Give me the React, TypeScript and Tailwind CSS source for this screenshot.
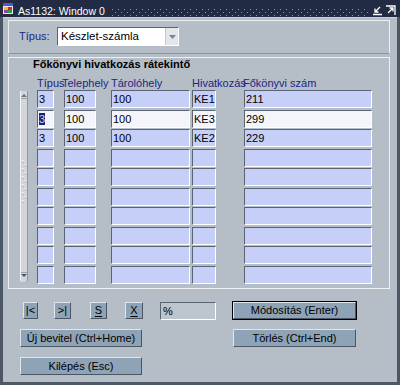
import React from "react";

const rows: string[][] = [
  ["3", "100", "100", "KE1", "211"],
  ["3", "100", "100", "KE3", "299"],
  ["3", "100", "100", "KE2", "229"],
  ["", "", "", "", ""],
  ["", "", "", "", ""],
  ["", "", "", "", ""],
  ["", "", "", "", ""],
  ["", "", "", "", ""],
  ["", "", "", "", ""],
  ["", "", "", "", ""],
];

// field widths and the gap before each one
const cols = [
  "w-[17px]",
  "w-[32px] ml-[10px]",
  "w-[79px] ml-[15px]",
  "w-[24px] ml-[2px]",
  "w-[128px] ml-[28px]",
];

const inset =
  "border border-t-[#5b6475] border-l-[#5b6475] border-b-white border-r-white";

function Btn({
  children,
  className = "",
}: {
  children: React.ReactNode;
  className?: string;
}) {
  return (
    <div
      className={`flex items-center justify-center bg-[#8ea3b6] border border-t-[#dfe6ec] border-l-[#dfe6ec] border-b-[#4a5664] border-r-[#4a5664] text-black ${className}`}
    >
      {children}
    </div>
  );
}

function TitleIcon() {
  return (
    <svg width="12" height="13" viewBox="0 0 12 13">
      <rect x="0.5" y="0.5" width="11" height="12" fill="#e6e6ee" stroke="#2a2a3a" />
      <rect x="1" y="1" width="10" height="3" fill="#4a5ad0" />
      <rect x="2" y="5" width="4" height="3" fill="#e4c420" />
      <rect x="6" y="5" width="4" height="3" fill="#d02828" />
      <rect x="2" y="8" width="4" height="3" fill="#9040b0" />
      <rect x="6" y="8" width="4" height="3" fill="#28a048" />
    </svg>
  );
}

export default function App() {
  return (
    <div className="w-[400px] h-[385px] flex flex-col bg-[#4d5867] overflow-hidden font-['Liberation_Sans',Arial,sans-serif] text-[11px]">
      {/* title bar */}
      <div className="h-[17px] flex items-start bg-[#212b43] text-white shrink-0">
        <div className="ml-[2px] mt-[2px]">
          <TitleIcon />
        </div>
        <div className="ml-[4px] pt-[5px] leading-[12px] text-[10.5px] whitespace-nowrap">
          As1132: Window 0
        </div>
        <svg className="ml-[6px] mt-[8px] flex-1" height="8">
          <defs>
            <pattern id="dots" width="6" height="6" patternUnits="userSpaceOnUse">
              <rect x="1" y="1" width="1" height="1" fill="#8a96ad" />
              <rect x="4" y="4" width="1" height="1" fill="#8a96ad" />
            </pattern>
          </defs>
          <rect width="100%" height="8" fill="url(#dots)" />
        </svg>
        <svg className="ml-[3px] mt-[5px]" width="11" height="11" viewBox="0 0 11 11">
          <path d="M8 2 L3 7 M3 3.5 V7 H6.5 M1 9.5 H10" stroke="white" strokeWidth="1.3" fill="none" />
        </svg>
        <svg className="ml-[2px] mr-[4px] mt-[5px]" width="11" height="11" viewBox="0 0 11 11">
          <path d="M3 8 L8 3 M4.5 3 H8 V6.5 M1 1 H10 V10" stroke="white" strokeWidth="1.3" fill="none" />
        </svg>
      </div>

      {/* window body */}
      <div className="flex-1 mx-[3px] mb-[3px] bg-[#b5bec7] border-t border-t-[#c9d0d7] flex flex-col">
        {/* type selector panel */}
        <div className="mt-[2px] ml-[5px] w-[382px] h-[34px] border border-t-[#eef1f4] border-l-[#eef1f4] border-r-[#eef1f4] border-b-[#8a94a0] flex items-start pt-[6px] pl-[10px]">
          <div className="w-[38px] h-[19px] leading-[19px] text-[#1f2388]">Típus:</div>
          <div className={`w-[122px] h-[19px] bg-white ${inset} flex items-center`}>
            <span className="flex-1 pl-[3px] text-[11.5px] text-black leading-[17px]">
              Készlet-számla
            </span>
            <div className="w-[13px] h-[17px] bg-[#e3e6ea] border-l border-l-[#c4c9cf] flex items-center justify-center">
              <svg width="7" height="4" viewBox="0 0 7 4">
                <path d="M0 0 H7 L3.5 4 Z" fill="#7d848c" />
              </svg>
            </div>
          </div>
        </div>

        {/* table panel */}
        <div className="mt-[3px] ml-[5px] w-[382px] h-[232px] border border-[#eef1f4] flex flex-col">
          <div className="h-[13px] leading-[13px] pl-[24px] font-bold text-black">
            Főkönyvi hivatkozás rátekintő
          </div>
          <div className="mt-[6px] h-[12px] leading-[12px] pl-[28px] flex text-[#1f2388] whitespace-nowrap">
            <span className="w-[25px]">Típus</span>
            <span className="w-[49px]">Telephely</span>
            <span className="w-[81px]">Tárolóhely</span>
            <span className="w-[51px]">Hivatkozás</span>
            <span>Főkönyvi szám</span>
          </div>
          <div className="mt-[1px] flex pl-[11px]">
            {/* scrollbar */}
            <div className="mt-[1px] w-[8px] h-[191px] bg-[#d2d6da] border-l border-l-[#f2f4f6] border-r border-r-[#8c96a1] rounded-b-[3px] flex flex-col items-center">
              <svg className="mt-[2px]" width="6" height="7" viewBox="0 0 6 7">
                <path d="M0 4 L3 1 L6 4 Z" fill="#6c7480" />
                <rect x="0" y="5" width="6" height="1" fill="#9aa2ac" />
              </svg>
              <svg className="mt-[60px]" width="6" height="44" viewBox="0 0 6 44">
                {[0, 1, 2, 3, 4, 5, 6, 7, 8, 9, 10].map((i) => (
                  <rect key={i} x={i % 2 ? 4 : 1} y={i * 4} width="1.5" height="1.5" fill="#f8f8f8" />
                ))}
                {[0, 1, 2, 3, 4, 5, 6, 7, 8, 9, 10].map((i) => (
                  <rect key={"d" + i} x={i % 2 ? 4.5 : 1.5} y={i * 4 + 1.5} width="1" height="1" fill="#8a929c" />
                ))}
              </svg>
              <div className="flex-1" />
              <svg className="mb-[4px]" width="6" height="6" viewBox="0 0 6 6">
                <rect x="0" y="0" width="6" height="1" fill="#9aa2ac" />
                <path d="M0 2 L6 2 L3 5 Z" fill="#4c5460" />
              </svg>
            </div>
            {/* rows */}
            <div className="ml-[9px] flex flex-col gap-[1.5px]">
              {rows.map((r, ri) => (
                <div key={ri} className="flex h-[18px]">
                  {r.map((v, ci) => (
                    <div
                      key={ci}
                      className={`${cols[ci]} h-[18px] ${inset} ${
                        ri === 1 ? "bg-[#f4f5fa]" : "bg-[#c6cff8]"
                      } pl-[1px] leading-[16px] text-black whitespace-nowrap overflow-hidden`}
                    >
                      {ri === 1 && ci === 0 ? (
                        <span className="bg-[#18227e] text-[#c6cff8]">{v}</span>
                      ) : (
                        v
                      )}
                    </div>
                  ))}
                </div>
              ))}
            </div>
          </div>
        </div>

        {/* record navigation */}
        <div className="mt-[12px] h-[19px] flex items-center pl-[20px]">
          <Btn className="w-[15px] h-[17px]">|&lt;</Btn>
          <Btn className="ml-[16px] w-[17px] h-[17px]">&gt;|</Btn>
          <Btn className="ml-[19px] w-[17px] h-[17px]">
            <span className="underline underline-offset-2">S</span>
          </Btn>
          <Btn className="ml-[18px] w-[18px] h-[17px]">
            <span className="underline underline-offset-2">X</span>
          </Btn>
          <div className={`ml-[17px] w-[56px] h-[18px] ${inset} bg-[#bcc4cc] pl-[2px] leading-[16px] text-black`}>
            %
          </div>
          <div className="ml-[16px] w-[125px] h-[19px] border border-black flex">
            <Btn className="flex-1">Módosítás (Enter)</Btn>
          </div>
        </div>

        <div className="mt-[9px] h-[18px] flex pl-[17px]">
          <Btn className="w-[122px]">Új bevitel (Ctrl+Home)</Btn>
          <Btn className="ml-[91px] w-[123px]">Törlés (Ctrl+End)</Btn>
        </div>

        <div className="mt-[10px] h-[18px] flex pl-[17px]">
          <Btn className="w-[122px]">Kilépés (Esc)</Btn>
        </div>
      </div>
    </div>
  );
}
